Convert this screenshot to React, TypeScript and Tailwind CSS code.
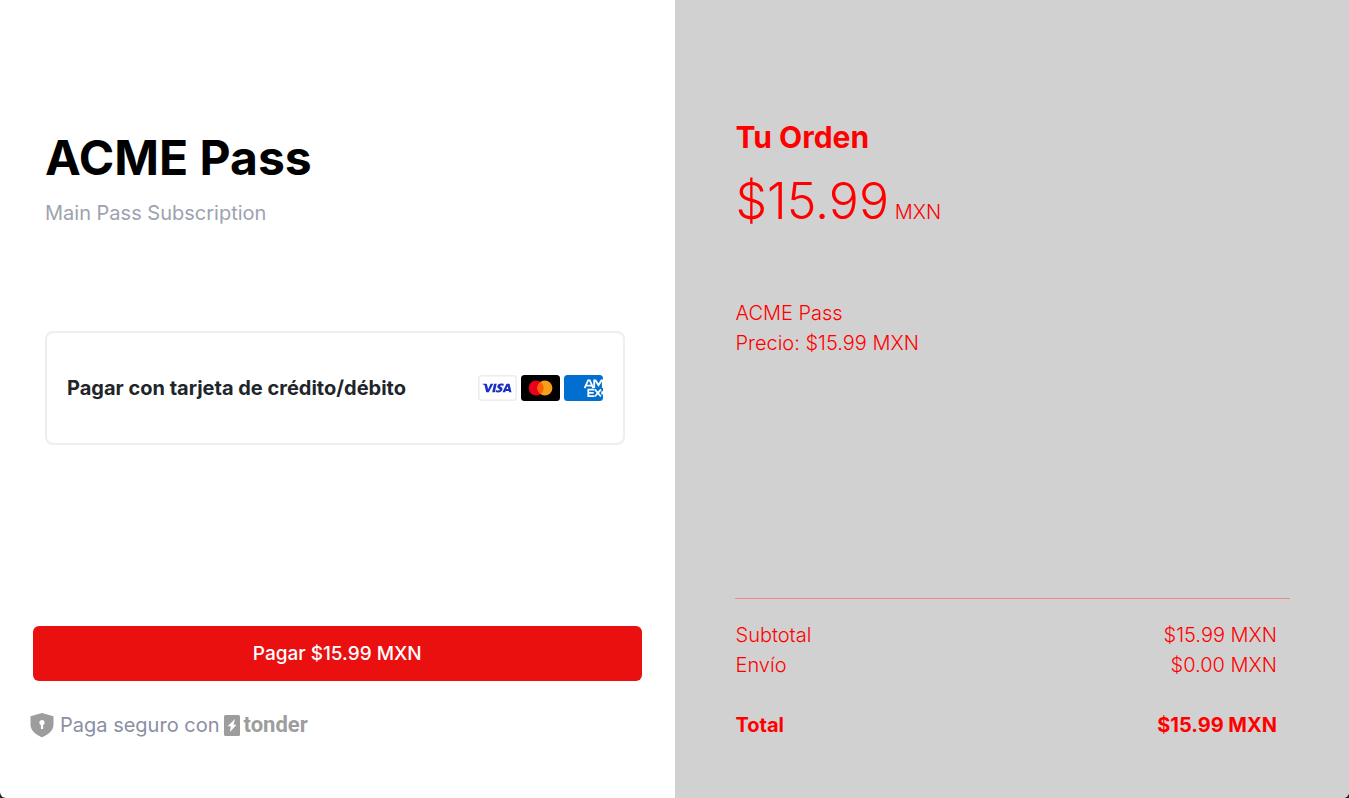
function VisaCard() {
  return (
    <svg viewBox="0 0 39 26" className="h-[26px] w-[39px]" role="img" aria-label="Visa">
      <rect x="0.75" y="0.75" width="37.5" height="24.5" rx="3" fill="#fff" stroke="#ececec" strokeWidth="1.5" />
      <g fill="#1a2fc4" transform="translate(-.5 -.1)">
        <path d="M5.2 8.8h3.1c.8 0 1.1.3 1.3 1l1 4.5 2.5-5.5h2.7l-4.5 8.6H8.7L7.2 10.9c-.1-.6-.3-.8-.8-1L5.1 9.4z" />
        <path d="M16.6 8.8h2.6l-1.9 8.6h-2.6z" />
        <path d="M26.3 9.1l-.5 2c-1.7-.7-3.2-.6-3.3.1-.1.9 2.7 1 2.5 3.2-.2 2.8-4 3.7-7 2.7l.5-2.1c1.7.8 3.7.7 3.8-.1.1-.9-2.6-1-2.5-3.2.1-2.7 3.5-3.7 6.5-2.6z" />
        <path d="M29.6 8.8h2.4l2 8.6h-2.4l-.3-1.4h-3.1l-.6 1.4h-2.6l3.6-7.9c.2-.5.5-.7 1-.7zm.5 2.5-1.2 2.9h1.9z" fillRule="evenodd" />
      </g>
    </svg>
  );
}

function MastercardCard() {
  return (
    <svg viewBox="0 0 39 26" className="h-[26px] w-[39px]" role="img" aria-label="Mastercard">
      <rect width="39" height="26" rx="3.5" fill="#000" />
      <circle cx="15.1" cy="13" r="7.5" fill="#eb001b" />
      <circle cx="23.9" cy="13" r="7.5" fill="#f79e1b" />
      <path d="M19.5 6.9a7.5 7.5 0 0 1 0 12.2 7.5 7.5 0 0 1 0-12.2z" fill="#ff5f00" />
    </svg>
  );
}

function AmexCard() {
  return (
    <svg viewBox="0 0 39 26" className="h-[26px] w-[39px]" role="img" aria-label="American Express">
      <rect width="39" height="26" rx="3.5" fill="#016fd0" />
      <g fill="none" stroke="#fff" strokeWidth="1.8">
        <path d="M20.6 13.1 24.1 5.3h1.7l3.5 7.8M22.3 10.6h5.3" />
        <path d="M30.2 13.1V5.5h1.4l2.9 4.8 2.9-4.8h1.4v7.6" />
        <path d="M30.3 14.7h-6v6.5h6M24.3 17.9h5.4" />
        <path d="m30.8 14.3 6.1 7.2M37 14.3l-6.2 7.2M38.2 16.3v3.2" />
      </g>
    </svg>
  );
}

function ShieldIcon() {
  return (
    <svg viewBox="0 0 24 26" className="h-[26px] w-6 shrink-0" aria-hidden="true">
      <path d="M12 1 23.5 4.3v8.3c0 5.9-5.3 10.5-11.5 12.7C5.8 23.1.5 18.5.5 12.6V4.3z" fill="#9d9d9d" />
      <circle cx="12" cy="10.6" r="2.6" fill="#fff" />
      <path d="M10.9 12h2.2v5h-2.2z" fill="#fff" />
    </svg>
  );
}

function TonderLogo() {
  return (
    <span className="flex items-center gap-[3px] text-[#9d9d9d]">
      <svg viewBox="0 0 16 21" className="h-[21px] w-4" aria-hidden="true">
        <rect width="16" height="21" rx="1.5" fill="currentColor" />
        <path d="M11 4 3.6 11.2h3.2l-.9 5.9 6.7-7.3H9.600z" fill="#fff" />
      </svg>
      <span className="font-['Roboto',sans-serif] text-[22px] leading-[30px] font-bold">tonder</span>
    </span>
  );
}

export default function App() {
  return (
    <div className="bg-[#222222]">
      <main className="grid min-h-screen grid-cols-2 overflow-hidden rounded-b-[6px] bg-white font-['Inter',sans-serif] text-xl leading-[30px]">
        <section className="flex flex-col pt-32 pb-[58px]">
          <header className="px-[45px]">
            <h1 className="text-5xl leading-[60px] font-bold text-black">ACME Pass</h1>
            <p className="mt-[10px] text-[#9ca3af]">Main Pass Subscription</p>
          </header>
          <div className="mt-[103px] mr-[50px] ml-[45px] flex h-[114px] items-center justify-between rounded-lg border-2 border-[#eeeeee] px-5">
            <h2 className="font-bold text-[#212529]">Pagar con tarjeta de crédito/débito</h2>
            <div className="flex gap-1">
              <VisaCard />
              <MastercardCard />
              <AmexCard />
            </div>
          </div>
          <button type="button" className="mx-[33px] mt-auto h-[55px] rounded-md bg-[#eb1010] text-[19px] font-medium text-white">
            Pagar $15.99 MXN
          </button>
          <footer className="mt-[29px] flex items-center pl-[30px] text-[#8a8fa3]">
            <ShieldIcon />
            <span className="mr-[5px] ml-1.5">Paga seguro con</span>
            <TonderLogo />
          </footer>
        </section>
        <aside className="flex flex-col bg-[#d1d1d1] pt-[119px] pr-[59px] pb-[58px] pl-[60px] font-light text-[#ff0000]">
          <div className="px-px">
            <h2 className="text-3xl leading-9 font-bold">Tu Orden</h2>
            <p className="mt-4 leading-[60px]">
              <span className="text-[50px] leading-[60px]">$15.99</span> MXN
            </p>
            <div className="mt-14">
              <p>ACME Pass</p>
              <p>Precio: $15.99 MXN</p>
            </div>
          </div>
          <dl className="mt-auto grid grid-cols-2 border-t border-[#e88b8b] pt-[21px] pr-[13px] pl-px">
            <dt>Subtotal</dt>
            <dd className="text-right">$15.99 MXN</dd>
            <dt>Envío</dt>
            <dd className="text-right">$0.00 MXN</dd>
            <dt className="mt-[30px] font-bold">Total</dt>
            <dd className="mt-[30px] text-right font-bold">$15.99 MXN</dd>
          </dl>
        </aside>
      </main>
    </div>
  );
}
